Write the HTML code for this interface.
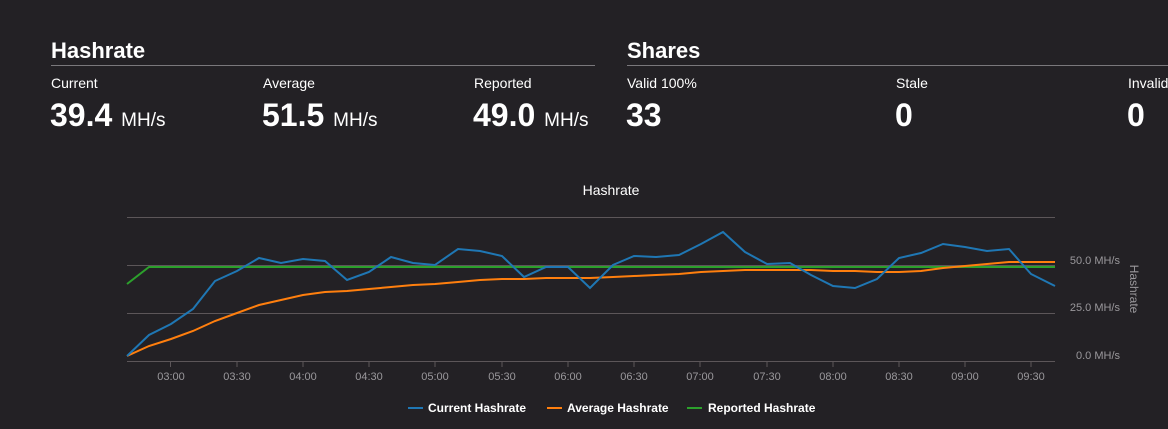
<!DOCTYPE html>
<html><head><meta charset="utf-8"><style>
body{margin:0;background:#232125;width:1168px;height:424px;overflow:hidden;font-family:"Liberation Sans",Arial,sans-serif;}
</style></head><body>
<svg width="1168" height="424" xmlns="http://www.w3.org/2000/svg" font-family="Liberation Sans, Arial, sans-serif">
<rect width="1168" height="424" fill="#232125"/>
<g fill="#fff">
<text x="51" y="58" font-size="22" font-weight="bold">Hashrate</text>
<text x="627" y="58" font-size="22" font-weight="bold">Shares</text>
</g>
<line x1="51" y1="65.5" x2="595" y2="65.5" stroke="#7a787c" stroke-width="1"/>
<line x1="627" y1="65.5" x2="1168" y2="65.5" stroke="#7a787c" stroke-width="1"/>
<g fill="#fff" font-size="14">
<text x="51" y="88">Current</text>
<text x="263" y="88">Average</text>
<text x="474" y="88">Reported</text>
<text x="627" y="88">Valid 100%</text>
<text x="896" y="88">Stale</text>
<text x="1128" y="88">Invalid</text>
</g>
<g fill="#fff" font-size="32" font-weight="bold">
<text x="50" y="126">39.4 <tspan font-size="19" font-weight="normal">MH/s</tspan></text>
<text x="262" y="126">51.5 <tspan font-size="19" font-weight="normal">MH/s</tspan></text>
<text x="473" y="126">49.0 <tspan font-size="19" font-weight="normal">MH/s</tspan></text>
<text x="626" y="126">33</text>
<text x="895" y="126">0</text>
<text x="1127" y="126">0</text>
</g>
<text x="611" y="195" fill="#fff" font-size="14" text-anchor="middle">Hashrate</text>
<g stroke="#5c5659" stroke-width="1">
<line x1="127" y1="217.5" x2="1055" y2="217.5"/>
<line x1="127" y1="265.5" x2="1055" y2="265.5"/>
<line x1="127" y1="313.5" x2="1055" y2="313.5"/>
<line x1="127" y1="361.5" x2="1055" y2="361.5"/>
<g>
<line x1="170.5" y1="361" x2="170.5" y2="367"/><line x1="237" y1="361" x2="237" y2="367"/><line x1="303" y1="361" x2="303" y2="367"/><line x1="369" y1="361" x2="369" y2="367"/><line x1="435" y1="361" x2="435" y2="367"/><line x1="502" y1="361" x2="502" y2="367"/><line x1="568" y1="361" x2="568" y2="367"/><line x1="634" y1="361" x2="634" y2="367"/><line x1="700" y1="361" x2="700" y2="367"/><line x1="767" y1="361" x2="767" y2="367"/><line x1="833" y1="361" x2="833" y2="367"/><line x1="899" y1="361" x2="899" y2="367"/><line x1="965" y1="361" x2="965" y2="367"/><line x1="1031" y1="361" x2="1031" y2="367"/>
</g></g>
<g fill="#9a989c" font-size="11" text-anchor="middle">
<text x="171" y="380">03:00</text><text x="237" y="380">03:30</text><text x="303" y="380">04:00</text><text x="369" y="380">04:30</text><text x="435" y="380">05:00</text><text x="502" y="380">05:30</text><text x="568" y="380">06:00</text><text x="634" y="380">06:30</text><text x="700" y="380">07:00</text><text x="767" y="380">07:30</text><text x="833" y="380">08:00</text><text x="899" y="380">08:30</text><text x="965" y="380">09:00</text><text x="1031" y="380">09:30</text>
</g>
<g fill="#9a989c" font-size="11" text-anchor="end">
<text x="1120" y="264">50.0 MH/s</text>
<text x="1120" y="311">25.0 MH/s</text>
<text x="1120" y="359">0.0 MH/s</text>
</g>
<text transform="translate(1130,289) rotate(90)" fill="#9a989c" font-size="12" text-anchor="middle">Hashrate</text>
<polyline fill="none" stroke="#2ca02c" stroke-width="2" points="127,284 149,267 1055,267"/>
<polyline fill="none" stroke="#ff7f0e" stroke-width="2" points="127,356 149,346 171,339 193,331 215,321 237,313 259,305 281,300 303,295 325,292 347,291 369,289 391,287 413,285 435,284 458,282 480,280 502,279 524,279 546,278 568,278 590,278 613,277 634,276 656,275 679,274 701,272 723,271 745,270 767,270 790,270 811,270 833,271 855,271 877,272 899,272 921,271 943,268 965,266 987,264 1009,262 1031,262 1055,262"/>
<polyline fill="none" stroke="#1f77b4" stroke-width="2" points="127,356 149,335 171,324 193,309 215,281 237,271 259,258 281,263 303,259 325,261 347,280 369,272 391,257 413,263 435,265 458,249 480,251 502,256 524,277 546,267 568,267 590,288 613,265 634,256 656,257 679,255 701,244 723,232 745,252 767,264 790,263 811,275 833,286 855,288 877,279 899,258 921,253 943,244 965,247 987,251 1009,249 1031,274 1055,286"/>
<g font-size="12" font-weight="bold" fill="#fff">
<line x1="408" y1="408" x2="423" y2="408" stroke="#1f77b4" stroke-width="2"/>
<text x="428" y="412">Current Hashrate</text>
<line x1="547" y1="408" x2="562" y2="408" stroke="#ff7f0e" stroke-width="2"/>
<text x="567" y="412">Average Hashrate</text>
<line x1="687" y1="408" x2="702" y2="408" stroke="#2ca02c" stroke-width="2"/>
<text x="708" y="412">Reported Hashrate</text>
</g>
</svg>
</body></html>
